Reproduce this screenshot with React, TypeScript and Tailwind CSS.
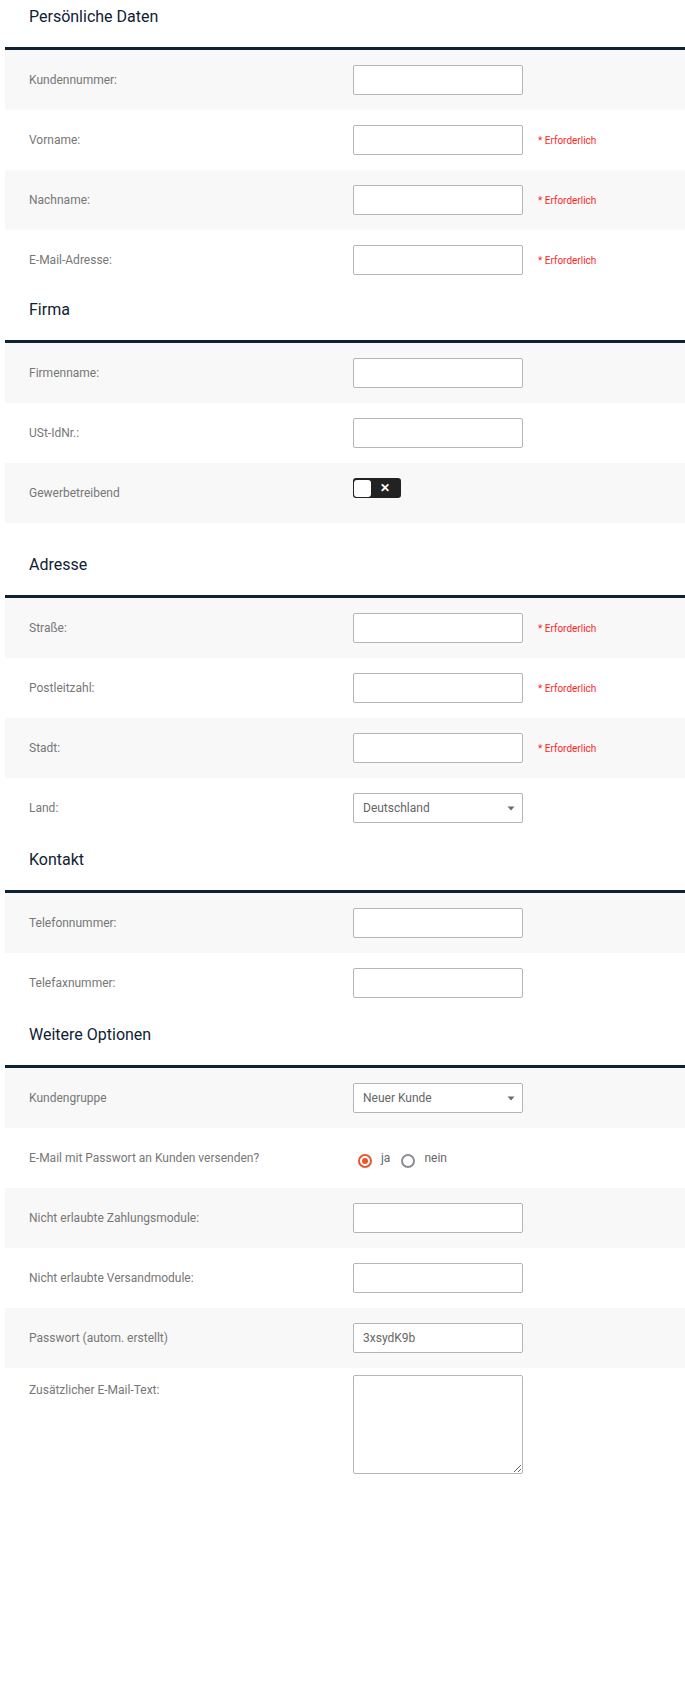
import type { ReactNode } from 'react';

type Field = {
  label: string;
  kind?: 'input' | 'select' | 'toggle' | 'radio' | 'textarea';
  value?: string;
  required?: boolean;
};

type Section = {
  title: string;
  head: string;
  fields: Field[];
};

const sections: Section[] = [
  {
    title: 'Persönliche Daten',
    head: 'h-[50px]',
    fields: [
      { label: 'Kundennummer:' },
      { label: 'Vorname:', required: true },
      { label: 'Nachname:', required: true },
      { label: 'E-Mail-Adresse:', required: true },
    ],
  },
  {
    title: 'Firma',
    head: 'h-[53px]',
    fields: [
      { label: 'Firmenname:' },
      { label: 'USt-IdNr.:' },
      { label: 'Gewerbetreibend', kind: 'toggle' },
    ],
  },
  {
    title: 'Adresse',
    head: 'h-[53px] mt-[22px]',
    fields: [
      { label: 'Straße:', required: true },
      { label: 'Postleitzahl:', required: true },
      { label: 'Stadt:', required: true },
      { label: 'Land:', kind: 'select', value: 'Deutschland' },
    ],
  },
  {
    title: 'Kontakt',
    head: 'h-[55px]',
    fields: [{ label: 'Telefonnummer:' }, { label: 'Telefaxnummer:' }],
  },
  {
    title: 'Weitere Optionen',
    head: 'h-[55px]',
    fields: [
      { label: 'Kundengruppe', kind: 'select', value: 'Neuer Kunde' },
      { label: 'E-Mail mit Passwort an Kunden versenden?', kind: 'radio' },
      { label: 'Nicht erlaubte Zahlungsmodule:' },
      { label: 'Nicht erlaubte Versandmodule:' },
      { label: 'Passwort (autom. erstellt)', value: '3xsydK9b' },
      { label: 'Zusätzlicher E-Mail-Text:', kind: 'textarea' },
    ],
  },
];

function Control({ f }: { f: Field }): ReactNode {
  switch (f.kind) {
    case 'toggle':
      return (
        <div className="self-start mt-[15px] w-[48px] h-[20px] rounded-[3px] bg-[#222] flex items-center px-[1px]">
          <span className="w-[17px] h-[17px] rounded-[3px] bg-white" />
          <span className="flex-1 text-center text-white text-[12px] font-bold leading-none pr-[2px]">✕</span>
        </div>
      );
    case 'select':
      return (
        <div className="h-[30px] border border-[#b5b5b5] rounded-[2px] bg-white flex items-center justify-between pl-[9px] pr-[7px] text-[12px] text-[#666]">
          <span>{f.value}</span>
          <svg width="8" height="5" viewBox="0 0 8 5">
            <path d="M0.5 0.5h7L4 4.5z" fill="#6b6b6b" />
          </svg>
        </div>
      );
    case 'radio':
      return (
        <div className="flex items-center text-[12px] text-[#666] pt-[5px]">
          <span className="w-[14px] h-[14px] rounded-full border-2 border-[#e8562d] flex items-center justify-center ml-[5px]">
            <span className="w-[6px] h-[6px] rounded-full bg-[#e8562d]" />
          </span>
          <span className="ml-[9px] -mt-[6px]">ja</span>
          <span className="w-[14px] h-[14px] rounded-full border-2 border-[#8c8c99] ml-[11px]" />
          <span className="ml-[9px] -mt-[6px]">nein</span>
        </div>
      );
    case 'textarea':
      return (
        <textarea className="block w-[170px] h-[99px] border border-[#b5b5b5] rounded-[2px] bg-white outline-none" />
      );
    default:
      return (
        <input
          readOnly
          value={f.value ?? ''}
          className="w-[170px] h-[30px] border border-[#b5b5b5] rounded-[2px] bg-white px-[9px] text-[12px] text-[#666] outline-none"
        />
      );
  }
}

function Row({ f, odd }: { f: Field; odd: boolean }) {
  const area = f.kind === 'textarea';
  return (
    <div
      className={`grid grid-cols-[324px_170px_1fr] pl-[24px] ${
        area ? 'items-start pt-[7px] pb-[8px]' : 'items-center h-[60px]'
      } ${odd ? 'bg-[#f8f8f8]' : 'bg-white'}`}
    >
      <div className={`text-[12px] text-[#777] ${area ? 'pt-[6px]' : ''}`}>{f.label}</div>
      <Control f={f} />
      <div className="pl-[15px] text-[10px] text-[#ff1f1f]">{f.required ? '* Erforderlich' : ''}</div>
    </div>
  );
}

export default function App() {
  return (
    <div className="min-h-[1699px] bg-white pl-[5px]" style={{ fontFamily: 'Roboto, "Liberation Sans", sans-serif' }}>
      {sections.map(s => (
        <div key={s.title}>
          <div className={`${s.head} flex items-end pl-[24px] pb-[18px] text-[16px] text-[#0f2233] border-b-[3px] border-[#0f2233]`}>
            {s.title}
          </div>
          {s.fields.map((f, i) => (
            <Row key={f.label} f={f} odd={i % 2 === 0} />
          ))}
        </div>
      ))}
    </div>
  );
}
